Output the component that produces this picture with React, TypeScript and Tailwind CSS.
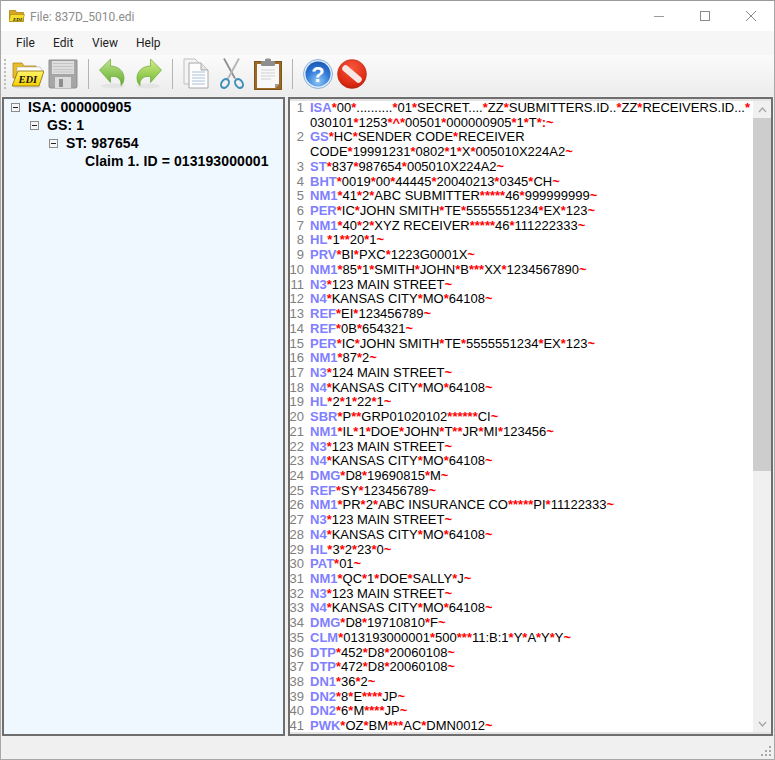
import React from "react";

const rows: { n?: number; t: string; first?: boolean }[] = [];
const src: (string | string[])[] = [
  ["ISA*00*..........*01*SECRET....*ZZ*SUBMITTERS.ID..*ZZ*RECEIVERS.ID...*", "030101*1253*^*00501*000000905*1*T*:~"],
  ["GS*HC*SENDER CODE*RECEIVER", "CODE*19991231*0802*1*X*005010X224A2~"],
  "ST*837*987654*005010X224A2~",
  "BHT*0019*00*44445*20040213*0345*CH~",
  "NM1*41*2*ABC SUBMITTER*****46*999999999~",
  "PER*IC*JOHN SMITH*TE*5555551234*EX*123~",
  "NM1*40*2*XYZ RECEIVER*****46*111222333~",
  "HL*1**20*1~",
  "PRV*BI*PXC*1223G0001X~",
  "NM1*85*1*SMITH*JOHN*B***XX*1234567890~",
  "N3*123 MAIN STREET~",
  "N4*KANSAS CITY*MO*64108~",
  "REF*EI*123456789~",
  "REF*0B*654321~",
  "PER*IC*JOHN SMITH*TE*5555551234*EX*123~",
  "NM1*87*2~",
  "N3*124 MAIN STREET~",
  "N4*KANSAS CITY*MO*64108~",
  "HL*2*1*22*1~",
  "SBR*P**GRP01020102******CI~",
  "NM1*IL*1*DOE*JOHN*T**JR*MI*123456~",
  "N3*123 MAIN STREET~",
  "N4*KANSAS CITY*MO*64108~",
  "DMG*D8*19690815*M~",
  "REF*SY*123456789~",
  "NM1*PR*2*ABC INSURANCE CO*****PI*11122333~",
  "N3*123 MAIN STREET~",
  "N4*KANSAS CITY*MO*64108~",
  "HL*3*2*23*0~",
  "PAT*01~",
  "NM1*QC*1*DOE*SALLY*J~",
  "N3*123 MAIN STREET~",
  "N4*KANSAS CITY*MO*64108~",
  "DMG*D8*19710810*F~",
  "CLM*013193000001*500***11:B:1*Y*A*Y*Y~",
  "DTP*452*D8*20060108~",
  "DTP*472*D8*20060108~",
  "DN1*36*2~",
  "DN2*8*E****JP~",
  "DN2*6*M****JP~",
  "PWK*OZ*BM***AC*DMN0012~",
];
src.forEach((s, i) => {
  const parts = Array.isArray(s) ? s : [s];
  parts.forEach((t, j) => rows.push({ n: j === 0 ? i + 1 : undefined, t, first: j === 0 }));
});

function Tokens({ t, first }: { t: string; first?: boolean }) {
  const idx = t.indexOf("*");
  const head = first ? t.slice(0, idx) : "";
  const rest = first ? t.slice(idx) : t;
  const pieces = rest.split(/(\*\^\*|\*:~|[*~])/).filter(Boolean);
  return (
    <>
      {head && <span className="font-bold text-[#8080ff]">{head}</span>}
      {pieces.map((p, i) =>
        /^[*~^:]+$/.test(p) ? (
          <span key={i} className="font-bold text-[#ff0000]">{p}</span>
        ) : (
          <span key={i}>{p}</span>
        )
      )}
    </>
  );
}

function TreeBox() {
  return (
    <svg width="9" height="9" viewBox="0 0 9 9" className="shrink-0">
      <rect x="0.5" y="0.5" width="8" height="8" fill="#f4f6f8" stroke="#8c8c8c" />
      <path d="M2 4.5H7" stroke="#222" />
    </svg>
  );
}

function TreeRow({ indent, label, box = true }: { indent: string; label: string; box?: boolean }) {
  return (
    <div className={`flex h-[18px] items-center ${indent}`}>
      {box && <TreeBox />}
      <span className={`${box ? "ml-[8px]" : ""} whitespace-nowrap`}>{label}</span>
    </div>
  );
}

const Sep = () => <div className="mx-[10px] h-[30px] w-px bg-[#b4b4b4]" />;

const FolderIcon = () => (
  <svg width="32" height="32" viewBox="0 0 32 32">
    <defs>
      <linearGradient id="fy" x1="0" y1="0" x2="0" y2="1">
        <stop offset="0" stopColor="#fff46a" />
        <stop offset="1" stopColor="#f6d000" />
      </linearGradient>
    </defs>
    <ellipse cx="15" cy="29" rx="14" ry="1.6" fill="#d8d8d8" />
    <path d="M1 5h9l2 3h12v12H1z" fill="#e8bc2c" stroke="#a87c10" strokeWidth="0.7" />
    <path d="M5 9h23l2 3v8H5z" fill="#fff" stroke="#999" strokeWidth="0.5" />
    <path d="M6 13h26l-5 15H0z" fill="url(#fy)" stroke="#8a6c06" strokeWidth="0.8" />
    <text x="6.5" y="25" fontFamily="'Liberation Serif',serif" fontWeight="700" fontStyle="italic" fontSize="10.5" fill="#111">EDI</text>
  </svg>
);

const SaveIcon = () => (
  <svg width="30" height="30" viewBox="0 0 30 30">
    <path d="M1 1h28v27l-1 1H2l-1-1z" fill="#a6a6a6" stroke="#909090" />
    <rect x="4" y="2" width="22" height="13" fill="#dedede" />
    <path d="M5 4.5h20M5 7.5h20M5 10.5h20M5 13h20" stroke="#c4c4c4" />
    <rect x="7" y="18" width="16" height="11" fill="#dcdcdc" />
    <rect x="11" y="20" width="4" height="8" fill="#8d8d8d" />
  </svg>
);

const ArrowIcon = ({ flip, id, light }: { flip?: boolean; id: string; light?: boolean }) => (
  <svg width="26" height="32" viewBox="0 0 26 32" style={flip ? { transform: "scaleX(-1)" } : undefined}>
    <defs>
      <linearGradient id={id} x1="0" y1="0" x2="0" y2="1">
        <stop offset="0" stopColor={light ? "#d6ee8c" : "#bfe68a"} />
        <stop offset="1" stopColor={light ? "#6cb82e" : "#64ac30"} />
      </linearGradient>
    </defs>
    <ellipse cx="14" cy="28" rx="12" ry="2.5" fill="#e4e4e4" />
    <path d="M0.5 12L11.5 1v7c7.500 0 13.500 5 13.500 12 0 3-1 5.500-3 7.500 0.500-6-3-9-7.500-9h-3v6z" fill={`url(#${id})`} stroke="#6aa83a" strokeWidth="0.7" />
  </svg>
);

const CopyIcon = () => (
  <svg width="26" height="32" viewBox="0 0 26 32">
    <path d="M1 1h11l5 5v20H1z" fill="#f4f4f4" stroke="#c0c0c0" />
    <path d="M6 5h12l7 7v18H6z" fill="#fdfdfd" stroke="#a8a8a8" />
    <path d="M18 5v7h7" fill="#e4e4e4" stroke="#a8a8a8" />
    <path d="M9 14h13M9 17h13M9 20h13M9 23h13M9 26h13" stroke="#a9c0da" />
  </svg>
);

const ScissorsIcon = () => (
  <svg width="26" height="32" viewBox="0 0 26 32" fill="none">
    <path d="M5 0.500l11 20" stroke="#8f8f8f" strokeWidth="1.8" />
    <path d="M20 0.500L9 20.500" stroke="#b4b4b4" strokeWidth="1.8" />
    <ellipse cx="6" cy="25.500" rx="3.500" ry="4.800" transform="rotate(35 6 25.500)" stroke="#3f8fb8" strokeWidth="2" />
    <ellipse cx="20" cy="25.500" rx="3.500" ry="4.800" transform="rotate(-35 20 25.500)" stroke="#3f8fb8" strokeWidth="2" />
  </svg>
);

const ClipIcon = () => (
  <svg width="28" height="32" viewBox="0 0 28 32">
    <rect x="0.5" y="3.5" width="27" height="28" fill="#9c6a25" stroke="#7f541a" />
    <path d="M3 6h22v20l-4 4H3z" fill="#f8f8f8" />
    <path d="M25 26l-4 4v-4z" fill="#9a9a9a" />
    <rect x="7" y="3" width="14" height="5" rx="1" fill="#8e8e8e" />
    <rect x="11" y="0.5" width="6" height="4" rx="1.5" fill="#8e8e8e" />
    <path d="M7 12h14M7 15h14M7 18h14M7 21h10" stroke="#d0d0d0" />
  </svg>
);

const HelpIcon = () => (
  <svg width="30" height="30" viewBox="0 0 30 30">
    <defs>
      <radialGradient id="hb" cx="0.5" cy="0.8" r="0.8">
        <stop offset="0" stopColor="#8fc8f6" />
        <stop offset="0.6" stopColor="#2f78d8" />
        <stop offset="1" stopColor="#1a58b0" />
      </radialGradient>
    </defs>
    <circle cx="15" cy="15" r="14.500" fill="#dcecfa" stroke="#8db4dc" />
    <circle cx="15" cy="15" r="12.500" fill="url(#hb)" />
    <text x="15" y="23" textAnchor="middle" fontFamily="'Liberation Sans',sans-serif" fontWeight="700" fontSize="22" fill="#fff">?</text>
  </svg>
);

const StopIcon = () => (
  <svg width="30" height="30" viewBox="0 0 30 30">
    <defs>
      <radialGradient id="sr" cx="0.5" cy="0.3" r="0.8">
        <stop offset="0" stopColor="#f8563c" />
        <stop offset="0.7" stopColor="#dc2a12" />
        <stop offset="1" stopColor="#a81408" />
      </radialGradient>
    </defs>
    <circle cx="15" cy="15" r="14.500" fill="url(#sr)" stroke="#b02a18" strokeWidth="0.5" />
    <path d="M8.500 9.500L21.500 20.500" stroke="#f8e8e4" strokeWidth="6.500" strokeLinecap="round" />
  </svg>
);

export default function App() {
  return (
    <div
      className="flex h-[760px] w-[775px] flex-col overflow-hidden border border-t-[#9a9a9a] border-x-[#a8a8a8] border-b-[#a8a8a8] bg-[#f0f0f0] text-black"
      style={{ fontFamily: "'Liberation Sans', Arial, sans-serif" }}
    >
      {/* Title bar */}
      <div className="flex h-[30px] shrink-0 items-center bg-white">
        <svg width="16" height="16" viewBox="0 0 16 16" className="ml-[8px]">
          <path d="M0.5 2.500h6l1 2h7v9h-14z" fill="#d9a520" stroke="#9a7a08" strokeWidth="0.7" />
          <path d="M1.500 6.500h14l-2 7H0z" fill="#f7de2c" stroke="#9a7a08" strokeWidth="0.5" />
          <text x="4" y="12.500" fontSize="5" fontWeight="700" fontStyle="italic" fontFamily="'Liberation Serif',serif" fill="#111">EDI</text>
        </svg>
        <span className="ml-[5px] pt-[2px] text-[12px] text-[#8c8c8c]" style={{ fontFamily: "Roboto, sans-serif" }}>File: 837D_5010.edi</span>
        <div className="ml-auto flex h-full items-center">
          <svg width="46" height="30" viewBox="0 0 46 30" fill="none"><path d="M18 15.500H28" stroke="#9a9a9a" /></svg>
          <svg width="46" height="30" viewBox="0 0 46 30" fill="none"><rect x="18.500" y="10.500" width="9" height="9" stroke="#8a8a8a" /></svg>
          <svg width="46" height="30" viewBox="0 0 46 30" fill="none"><path d="M18 10l10 10M28 10L18 20" stroke="#8a8a8a" /></svg>
        </div>
      </div>

      {/* Menu */}
      <div className="flex h-[24px] shrink-0 items-center bg-[#f6f6f6] pl-[15px] text-[12px] text-[#222]" style={{ fontFamily: "Roboto, sans-serif" }}>
        <span className="w-[37px]">File</span>
        <span className="w-[39px]">Edit</span>
        <span className="w-[44px]">View</span>
        <span>Help</span>
      </div>

      {/* Toolbar */}
      <div className="flex h-[41px] shrink-0 items-center bg-gradient-to-b from-[#fbfbfb] to-[#ececec] pb-[3px] pl-[3px]">
        <div className="mr-[6px] h-[30px] border-l-2 border-dotted border-[#bdbdbd]" />
        <FolderIcon />
        <div className="ml-[4px]"><SaveIcon /></div>
        <Sep />
        <ArrowIcon id="ga" />
        <div className="ml-[11px]"><ArrowIcon flip id="gb" light /></div>
        <Sep />
        <CopyIcon />
        <div className="ml-[10px]"><ScissorsIcon /></div>
        <div className="ml-[9px]"><ClipIcon /></div>
        <Sep />
        <HelpIcon />
        <div className="ml-[4px]"><StopIcon /></div>
      </div>

      {/* Panels */}
      <div className="flex min-h-0 flex-1 pl-[1px] pr-[1px] pt-px">
        <div className="w-[283px] shrink-0 overflow-hidden border-2 border-[#6e6e6e] bg-[#f0f8ff] pl-[7px] text-[14px] font-bold leading-[18px] tracking-[0.1px]">
          <div className="-mt-px">
            <TreeRow indent="" label="ISA: 000000905" />
            <TreeRow indent="pl-[19px]" label="GS: 1" />
            <TreeRow indent="pl-[38px]" label="ST: 987654" />
            <TreeRow indent="pl-[74px]" label="Claim 1. ID = 013193000001" box={false} />
          </div>
        </div>
        <div className="ml-[3px] flex min-w-0 flex-1 overflow-hidden border-2 border-[#6e6e6e]">
          <div className="flex min-w-0 flex-1 overflow-hidden border-2 border-x-0 border-[#e4e4e4] bg-white">
            <div className="min-w-0 flex-1 overflow-hidden text-[13px] leading-[14.72px] text-black">
              {rows.map((r, i) => (
                <div key={i} className="flex h-[14.72px] whitespace-nowrap">
                  <span className="flex w-[14px] shrink-0 justify-end text-[#808080]">{r.n ?? ""}</span>
                  <span className="ml-[6px]"><Tokens t={r.t} first={r.first} /></span>
                </div>
              ))}
            </div>
            <div className="flex w-[18px] shrink-0 flex-col bg-[#f0f0f0]">
              <div className="flex h-[17px] items-center justify-center">
                <svg width="9" height="6" viewBox="0 0 9 6" fill="none"><path d="M1 5l3.500-4L8 5" stroke="#a6a6a6" strokeWidth="1.3" /></svg>
              </div>
              <div className="h-[353px] bg-[#cdcdcd]" />
              <div className="flex-1" />
              <div className="flex h-[17px] items-center justify-center">
                <svg width="9" height="6" viewBox="0 0 9 6" fill="none"><path d="M1 1l3.500 4L8 1" stroke="#a6a6a6" strokeWidth="1.3" /></svg>
              </div>
            </div>
          </div>
        </div>
      </div>

      {/* Status bar */}
      <div className="flex h-[23px] shrink-0 items-end justify-end bg-[#f0f0f0] pb-[2px] pr-[2px]">
        <svg width="11" height="11" viewBox="0 0 11 11" fill="#a8a8a8">
          <rect x="8" y="0" width="2" height="2" />
          <rect x="4" y="4" width="2" height="2" /><rect x="8" y="4" width="2" height="2" />
          <rect x="0" y="8" width="2" height="2" /><rect x="4" y="8" width="2" height="2" /><rect x="8" y="8" width="2" height="2" />
        </svg>
      </div>
    </div>
  );
}
